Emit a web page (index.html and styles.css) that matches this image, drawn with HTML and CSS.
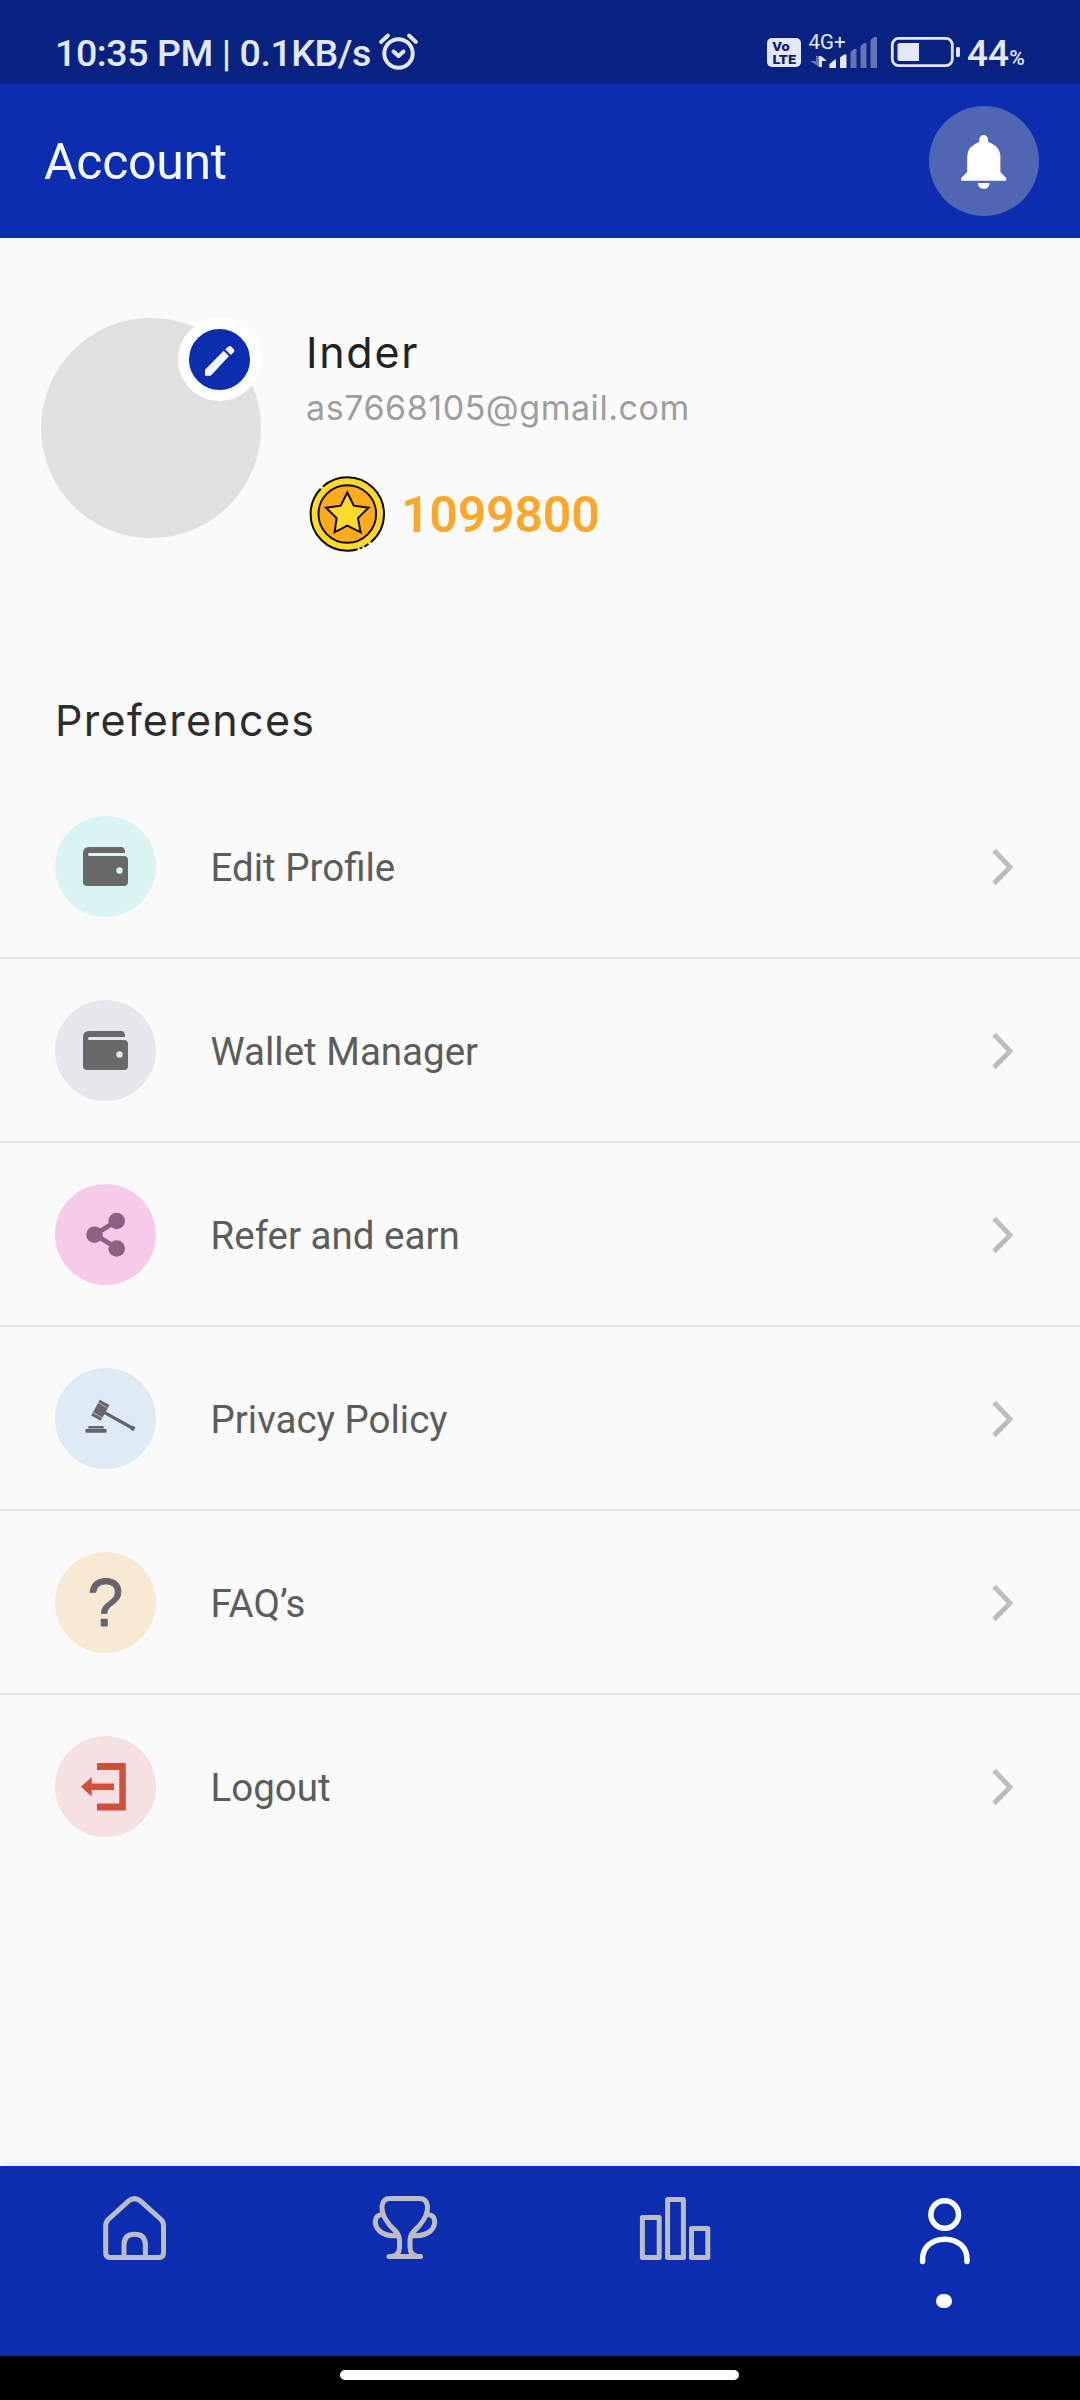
FILE: index.html
```html
<!DOCTYPE html>
<html lang="en">
<head>
<meta charset="utf-8">
<title>Account</title>
<link rel="stylesheet" href="styles.css">
</head>
<body>
<div class="screen">
  <div class="status">
    <span class="clock">10:35 PM | 0.1KB/s</span>
    <svg class="alarm" viewBox="378 32 42 40" width="42" height="40" fill="none" stroke="#e4e8f6" stroke-linecap="round" stroke-linejoin="round">
      <circle cx="398.500" cy="53.500" r="14.200" stroke-width="4"/>
      <path d="M393.500 51.500l5 4.500 5-4.500" stroke-width="4"/>
      <path d="M381 42l7-6.500M416 42l-7-6.500" stroke-width="3.800"/>
    </svg>
    <svg class="indicators" viewBox="760 30 270 45" width="270" height="45" fill="#e4e8f6">
      <rect x="767" y="38" width="34" height="29" rx="5"/>
      <g fill="#082282" class="volte"><text x="772.300" y="51.300" textLength="17.500" lengthAdjust="spacingAndGlyphs">Vo</text><text x="772.500" y="63.500" textLength="23.500" lengthAdjust="spacingAndGlyphs">LTE</text></g>
      <text class="net" x="808.500" y="49" textLength="37" lengthAdjust="spacingAndGlyphs">4G+</text>
      <path d="M820 67v-11h-3v5h-6z" transform="translate(-1)" fill="#6474b5" stroke="none"/>
      <path d="M819 56v11h3v-6h4v-1l-5-4z"/>
      <path d="M829.500 68v-4l5.500-4.500h1v8.500zM840 68v-10.500l4-3h2.500v13.500z"/>
      <path fill="#6474b5" d="M850.500 68v-16l3.500-3h2.500v19zM860.500 68v-22l3.500-3h2.500v25zM870.500 68v-28l3.500-3h3v31z"/>
      <rect x="892.300" y="38.300" width="60" height="27.400" rx="6.500" fill="none" stroke="#e4e8f6" stroke-width="2.800"/>
      <path d="M900 43h19v18h-19q-2.500 0-2.500-2.500v-13q0-2.500 2.500-2.500z"/>
      <rect x="956" y="47" width="4" height="10" rx="1.500"/>
      <text class="pct" x="967" y="66" textLength="42" lengthAdjust="spacingAndGlyphs">44</text>
      <text class="sign" x="1009.300" y="65" textLength="15.500" lengthAdjust="spacingAndGlyphs">%</text>
    </svg>
  </div>
  <header class="bar">
    <h1 class="title">Account</h1>
    <div class="bell">
      <svg viewBox="959 131 50 60" width="50" height="60" fill="#fff"><path d="M979.300 142v-2.500a4.400 4.400 0 0 1 8.800 0v2.500q12.300 4 12.300 15v15l5.800 6v2.700h-45v-2.700l6-6v-15q0-11 12.100-15zM977.800 183h11.800q-.6 5.800-5.900 5.800t-5.900-5.800z"/></svg>
    </div>
  </header>

  <section class="profile">
    <div class="avatar">
      <div class="edit">
        <svg viewBox="190 329 60 60" width="60" height="60" fill="#f5f7fc"><path d="M205 374.800v-6l18.700-19 5.300 5.300-18.200 19.700zM225.200 348.300l3-2.600q1.800-1.400 3.500.2l2 2.200q1.600 1.700 0 3.200l-2.800 2.600z"/></svg>
      </div>
    </div>
    <div class="info">
      <div class="name">Inder</div>
      <div class="email">as7668105@gmail.com</div>
      <div class="coins">
        <svg viewBox="308 475 78 78" width="78" height="78" stroke="#0c0a05" stroke-width="2">
          <circle cx="347.300" cy="514" r="36.700" fill="#fdd92b" stroke-dasharray="32 3 5 2 3 2 96 3 200"/>
          <circle cx="347.300" cy="514" r="28.800" fill="#fcab1c"/>
          <path fill="#fdd92b" d="M347.300 492.500l6.500 13.200 14.800 2-10.600 10.400 2.600 14.200-13.300-6.600-12.700 6.600 2-14.200-10.600-10.400 14.700-2z"/>
        </svg>
        <span class="count">1099800</span>
      </div>
    </div>
  </section>

  <h2 class="heading">Preferences</h2>
  <ul class="list">
    <li class="row"><span class="dot teal"><svg viewBox="0 0 101 101" width="101" height="101"><path fill="#696969" d="M34 31h32q4 0 4 5v1H34.500a1.300 1.300 0 0 0 0 3H69q4 0 4 4v22q0 4-4 4H32q-4 0-4-4V37q0-6 6-6z"/><circle cx="64.500" cy="54.500" r="3.200" fill="#daf4f3"/></svg></span><span class="label">Edit Profile</span><svg class="chev" viewBox="0 0 24 40" width="24" height="40"><path d="M3 3.500l16 16.500-16 16.500"/></svg></li>
    <li class="row"><span class="dot lilac"><svg viewBox="0 0 101 101" width="101" height="101"><path fill="#696969" d="M34 31h32q4 0 4 5v1H34.500a1.300 1.300 0 0 0 0 3H69q4 0 4 4v22q0 4-4 4H32q-4 0-4-4V37q0-6 6-6z"/><circle cx="64.500" cy="54.500" r="3.200" fill="#e8e6ed"/></svg></span><span class="label">Wallet Manager</span><svg class="chev" viewBox="0 0 24 40" width="24" height="40"><path d="M3 3.500l16 16.500-16 16.500"/></svg></li>
    <li class="row"><span class="dot pink"><svg viewBox="0 0 101 101" width="101" height="101" fill="#8e6082"><path d="M61.500 37L40 50.500 61.500 64" fill="none" stroke="#8e6082" stroke-width="5"/><circle cx="61.700" cy="37" r="8.300"/><circle cx="39.500" cy="50.700" r="8.300"/><circle cx="61.700" cy="64.500" r="8.300"/></svg></span><span class="label">Refer and earn</span><svg class="chev" viewBox="0 0 24 40" width="24" height="40"><path d="M3 3.500l16 16.500-16 16.500"/></svg></li>
    <li class="row"><span class="dot sky"><svg viewBox="0 0 101 101" width="101" height="101" fill="#67656c"><g transform="translate(45.300 42.300) rotate(29)"><path d="M-5.500-9h11v3.200h-11zM-5.500-5.300h11v1.800h-11zM-5.500 3.500h11v1.800h-11zM-5.500 5.800h11V9h-11zM-5.500-4H5.500v8h-11z"/><path d="M5-1.600h30.500V-2.200h3.500v4.400h-3.500v-.6H5z"/></g><path d="M34 58h14l1.500 2.500H32.500zM30.500 61h21v3.800h-21z"/></svg></span><span class="label">Privacy Policy</span><svg class="chev" viewBox="0 0 24 40" width="24" height="40"><path d="M3 3.500l16 16.500-16 16.500"/></svg></li>
    <li class="row"><span class="dot sand"><span class="q">?</span></span><span class="label">FAQ’s</span><svg class="chev" viewBox="0 0 24 40" width="24" height="40"><path d="M3 3.500l16 16.500-16 16.500"/></svg></li>
    <li class="row"><span class="dot rose"><svg viewBox="0 0 101 101" width="101" height="101" fill="#d04e3c"><path d="M42 27h28.800v47.500H42v-7h22.300V34H42zM26 50.800l10.700-9.700V47.500H59v6.500H36.700v6.500z"/></svg></span><span class="label">Logout</span><svg class="chev" viewBox="0 0 24 40" width="24" height="40"><path d="M3 3.500l16 16.500-16 16.500"/></svg></li>
  </ul>

  <nav class="tabs">
    <a class="tab"><svg viewBox="99 2190 72 78" width="72" height="78"><path d="M105.700 2225.500q0-3.500 2.500-6l20.500-18.700q5.800-4.400 11.600 0l20.700 18.700q2.500 2.500 2.500 6v27.500q0 4.500-4.500 4.500h-48.800q-4.500 0-4.500-4.500zM124 2257v-12q0-10.800 10.700-10.800t10.700 10.800v12"/></svg></a>
    <a class="tab"><svg viewBox="369 2190 72 78" width="72" height="78"><path d="M390 2198.500h29.500q7 0 8 7.500c.5 6-3 13.500-8 19.500-5 5.500-9.500 8-9.500 14.500v7q0 8.500 8 9.500M390 2198.500q-7 0-8 7.500c-.5 6 3 13.500 8 19.500 5 5.500 9.500 8 9.500 14.500v7q0 8.500-8 9.500M389 2256.500h31.500M382 2214.500c-9 1-8 11-2.500 16.500q6.500 5.500 17 4.500M428 2214.500c9 1 8 11 2.500 16.500q-6.500 5.500-18 4.500"/></svg></a>
    <a class="tab"><svg viewBox="639 2190 72 78" width="72" height="78"><path d="M642.400 2217.500h16.800v40h-16.800zM667.600 2199.500h15.800v58h-15.800zM691.500 2228.500h16.300v29h-16.300z"/></svg></a>
    <a class="tab active"><svg viewBox="909 2190 72 78" width="72" height="78"><ellipse cx="944.700" cy="2214.500" rx="13.800" ry="13.800"/><path d="M922.600 2261.500c-1-14 9-22.300 22.200-22.300s23.200 8.300 22.200 22.300"/></svg><span class="mark"></span></a>
  </nav>
  <div class="gesture"><span class="pill"></span></div>
</div>
</body>
</html>
```
FILE: styles.css
```css
* { box-sizing: border-box; }
body { margin: 0; font-family: Roboto, "Liberation Sans", sans-serif; background: #fafafa; }
.screen { width: 1080px; height: 2400px; display: flex; flex-direction: column; }

.status { height: 84px; background: #082282; display: flex; align-items: flex-start; padding: 30px 50px 0 55px; color: #e4e8f6; }
.clock { font-size: 37.5px; font-weight: 500; line-height: 47px; letter-spacing: -.42px; white-space: nowrap; width: 323px; }
.alarm { margin-top: 2px; }
.indicators { margin-left: auto; font-family: Roboto, sans-serif; }
.volte { font-size: 13.500px; font-weight: 900; }
.net { font-size: 20.500px; }
.pct { font-size: 37.500px; font-weight: 500; }
.sign { font-size: 21px; font-weight: 500; }

.bar { height: 154px; background: #0c2db0; display: flex; align-items: center; justify-content: space-between; padding: 0 41px 0 44px; }
.title { margin: 0; padding-top: 2px; color: #f5f7ff; font-size: 50px; font-weight: 400; line-height: 60px; letter-spacing: -.3px; }
.bell { width: 110px; height: 110px; border-radius: 50%; background: #5066b3; display: flex; align-items: center; justify-content: center; }

.profile { height: 430px; padding: 80px 41px 0; display: flex; gap: 45px; }
.avatar { position: relative; width: 220px; height: 220px; border-radius: 50%; background: #e0e0e0; }
.edit { position: absolute; top: 0; right: 0; width: 83px; height: 83px; border-radius: 50%; border: 11px solid #fff; background: #0c2db0; display: flex; align-items: center; justify-content: center; }
.edit svg { flex: none; }
.info { display: flex; flex-direction: column; font-family: Inter, sans-serif; }
.name { font-size: 43px; line-height: 60px; letter-spacing: 1.7px; margin-top: 4px; color: #222; }
.email { font-size: 34px; line-height: 50px; letter-spacing: .55px; padding-top: 1px; color: #9e9e9e; }
.coins { display: flex; align-items: center; gap: 15px; margin-top: 42px; margin-left: 2px; font-family: Roboto, sans-serif; }
.count { padding-top: 2px; font-size: 50px; font-weight: 600; line-height: 60px; letter-spacing: -.2px; color: #f9a82b; }

.heading { margin: 22px 0 0 55px; font-family: Inter, sans-serif; font-size: 43px; font-weight: 400; line-height: 60px; letter-spacing: 1.3px; color: #2c2c2c; }
.list { list-style: none; margin: 25px 0 0; padding: 0; flex: 1; }
.row { height: 184px; display: flex; align-items: center; padding: 1px 65px 0 55px; border-bottom: 2px solid #e6e6e6; }
.row:last-child { border-bottom-color: transparent; }
.dot { width: 101px; height: 101px; border-radius: 50%; display: flex; align-items: center; justify-content: center; }
.teal { background: #daf4f3; }
.lilac { background: #e8e6ed; }
.pink { background: #f6cbe9; }
.sky { background: #ddebf4; }
.sand { background: #f8e9d3; }
.rose { background: #f6e0e2; }
.q { font-family: "Liberation Sans", sans-serif; font-size: 69px; line-height: 101px; color: #67656c; -webkit-text-stroke: .8px #67656c; transform: scaleX(.94); }
.label { margin-left: 54.500px; padding-top: 3px; font-size: 38.500px; line-height: 46px; color: #5c5c5c; }
.chev { margin-left: auto; fill: none; stroke: #bdbdbd; stroke-width: 5; }

.tabs { height: 190px; background: #0c2db0; display: grid; grid-template-columns: repeat(4, 1fr); box-shadow: 0 -2px 14px rgba(0, 0, 0, .06); }
.tab { display: flex; flex-direction: column; align-items: center; padding-top: 24px; }
.tab svg { fill: none; stroke: #bcbdc4; stroke-width: 5; stroke-linecap: round; stroke-linejoin: round; }
.tab.active svg { stroke: #fff; stroke-width: 5.500; }
.mark { width: 16px; height: 14px; margin: 26px 2px 0 0; border-radius: 7px; background: #fff; }
.gesture { height: 44px; background: #000; display: flex; justify-content: center; padding: 14px 1px 0 0; }
.pill { width: 399px; height: 10px; border-radius: 5px; background: #fff; }
```
